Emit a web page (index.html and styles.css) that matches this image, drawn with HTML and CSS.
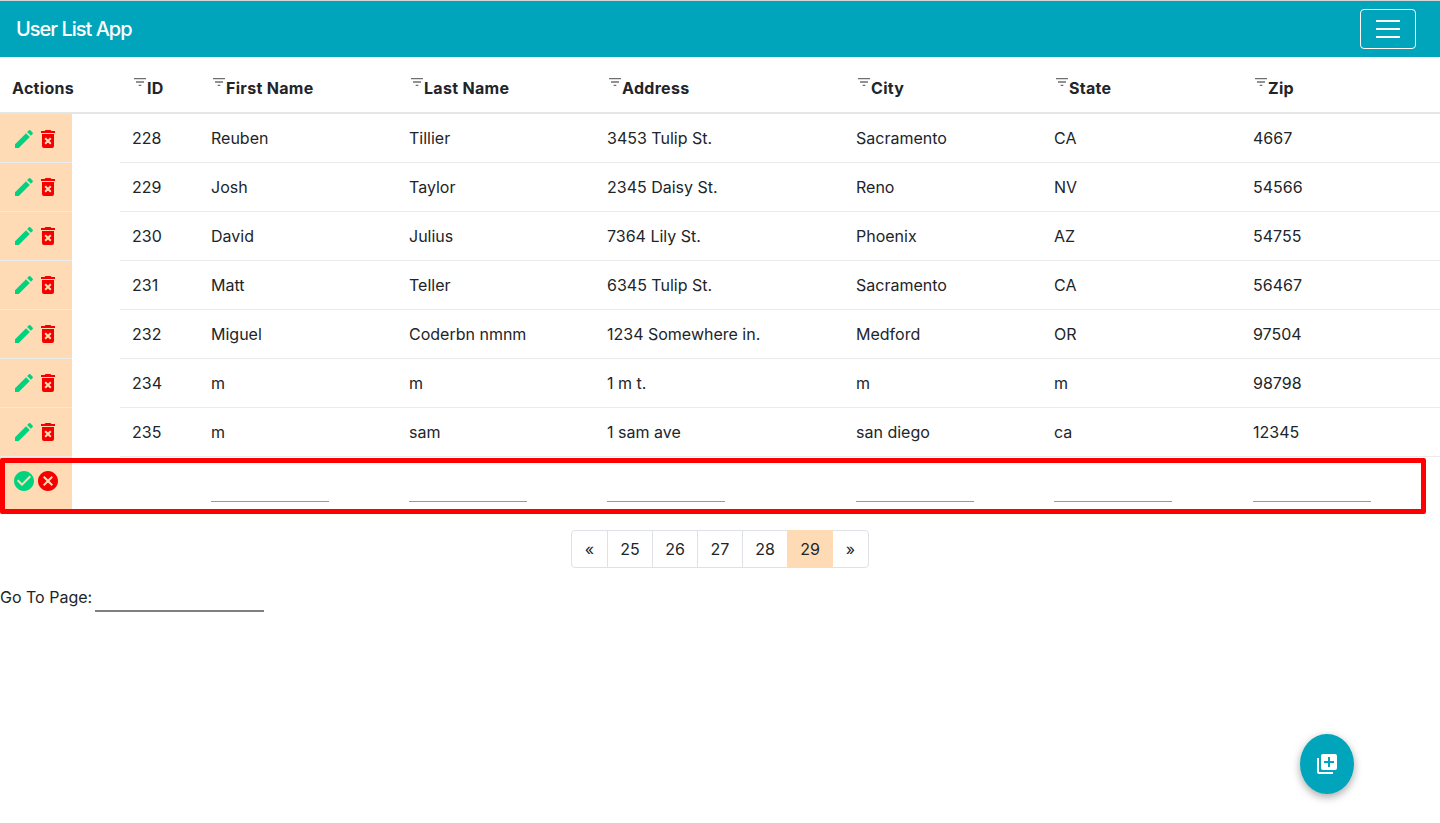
FILE: index.html
```html
<!DOCTYPE html>
<html lang="en">
<head>
<meta charset="utf-8">
<title>User List App</title>
<link rel="stylesheet" href="styles.css">
</head>
<body>
<svg class="sprites" aria-hidden="true">
  <symbol id="i-pencil" viewBox="0 0 24 24"><path d="M20.71,7.04C21.1,6.65 21.1,6 20.71,5.63L18.37,3.29C18,2.9 17.35,2.9 16.96,3.29L15.12,5.12L18.87,8.87M3,17.25V21H6.75L17.81,9.93L14.06,6.18L3,17.25Z"/></symbol>
  <symbol id="i-trash" viewBox="0 0 24 24"><path d="M6,19A2,2 0 0,0 8,21H16A2,2 0 0,0 18,19V7H6V19M8.46,11.88L9.87,10.47L12,12.59L14.12,10.47L15.53,11.88L13.41,14L15.53,16.12L14.12,17.53L12,15.41L9.87,17.53L8.46,16.12L10.59,14L8.46,11.88M15.5,4L14.5,3H9.5L8.5,4H5V6H19V4H15.5Z"/></symbol>
  <symbol id="i-filter" viewBox="0 0 24 24"><path d="M6,13H18V11H6M3,6V8H21V6M10,18H14V16H10V18Z"/></symbol>
</svg>

<nav class="navbar">
  <a class="brand">User List App</a>
  <button class="toggler" type="button" aria-label="Menu"><span></span><span></span><span></span></button>
</nav>

<div class="table-wrap">
  <table class="users">
    <colgroup>
      <col class="c-actions"><col class="c-gap"><col class="c-id"><col class="c-first"><col class="c-last"><col class="c-addr"><col class="c-city"><col class="c-state"><col class="c-zip">
    </colgroup>
    <thead>
      <tr>
        <th colspan="2">Actions</th>
        <th><span class="head"><svg class="filter"><use href="#i-filter"/></svg>ID</span></th>
        <th><span class="head"><svg class="filter"><use href="#i-filter"/></svg>First Name</span></th>
        <th><span class="head"><svg class="filter"><use href="#i-filter"/></svg>Last Name</span></th>
        <th><span class="head"><svg class="filter"><use href="#i-filter"/></svg>Address</span></th>
        <th><span class="head"><svg class="filter"><use href="#i-filter"/></svg>City</span></th>
        <th><span class="head"><svg class="filter"><use href="#i-filter"/></svg>State</span></th>
        <th><span class="head"><svg class="filter"><use href="#i-filter"/></svg>Zip</span></th>
      </tr>
    </thead>
    <tbody>
      <tr>
        <td class="act"><span class="icons"><svg class="ic green"><use href="#i-pencil"/></svg><svg class="ic red"><use href="#i-trash"/></svg></span></td><td class="gap"></td>
        <td>228</td><td>Reuben</td><td>Tillier</td><td>3453 Tulip St.</td><td>Sacramento</td><td>CA</td><td>4667</td>
      </tr>
      <tr>
        <td class="act"><span class="icons"><svg class="ic green"><use href="#i-pencil"/></svg><svg class="ic red"><use href="#i-trash"/></svg></span></td><td class="gap"></td>
        <td>229</td><td>Josh</td><td>Taylor</td><td>2345 Daisy St.</td><td>Reno</td><td>NV</td><td>54566</td>
      </tr>
      <tr>
        <td class="act"><span class="icons"><svg class="ic green"><use href="#i-pencil"/></svg><svg class="ic red"><use href="#i-trash"/></svg></span></td><td class="gap"></td>
        <td>230</td><td>David</td><td>Julius</td><td>7364 Lily St.</td><td>Phoenix</td><td>AZ</td><td>54755</td>
      </tr>
      <tr>
        <td class="act"><span class="icons"><svg class="ic green"><use href="#i-pencil"/></svg><svg class="ic red"><use href="#i-trash"/></svg></span></td><td class="gap"></td>
        <td>231</td><td>Matt</td><td>Teller</td><td>6345 Tulip St.</td><td>Sacramento</td><td>CA</td><td>56467</td>
      </tr>
      <tr>
        <td class="act"><span class="icons"><svg class="ic green"><use href="#i-pencil"/></svg><svg class="ic red"><use href="#i-trash"/></svg></span></td><td class="gap"></td>
        <td>232</td><td>Miguel</td><td>Coderbn nmnm</td><td>1234 Somewhere in.</td><td>Medford</td><td>OR</td><td>97504</td>
      </tr>
      <tr>
        <td class="act"><span class="icons"><svg class="ic green"><use href="#i-pencil"/></svg><svg class="ic red"><use href="#i-trash"/></svg></span></td><td class="gap"></td>
        <td>234</td><td>m</td><td>m</td><td>1 m t.</td><td>m</td><td>m</td><td>98798</td>
      </tr>
      <tr>
        <td class="act"><span class="icons"><svg class="ic green"><use href="#i-pencil"/></svg><svg class="ic red"><use href="#i-trash"/></svg></span></td><td class="gap"></td>
        <td>235</td><td>m</td><td>sam</td><td>1 sam ave</td><td>san diego</td><td>ca</td><td>12345</td>
      </tr>
      <tr class="edit-row">
        <td class="act">
          <span class="icons edit-icons">
            <svg class="ic green" viewBox="0 0 24 24"><path d="M12 2C6.5 2 2 6.5 2 12S6.5 22 12 22 22 17.5 22 12 17.5 2 12 2M10 17L5 12L6.41 10.59L10 14.17L17.59 6.58L19 8L10 17Z"/></svg>
            <svg class="ic red" viewBox="0 0 24 24"><path d="M12,2C17.53,2 22,6.47 22,12C22,17.53 17.53,22 12,22C6.47,22 2,17.53 2,12C2,6.47 6.47,2 12,2M15.59,7L12,10.59L8.41,7L7,8.41L10.59,12L7,15.59L8.41,17L12,13.41L15.59,17L17,15.59L13.41,12L17,8.41L15.59,7Z"/></svg>
          </span>
        </td>
        <td class="gap"></td>
        <td></td>
        <td><input class="field" type="text" aria-label="First Name"></td>
        <td><input class="field" type="text" aria-label="Last Name"></td>
        <td><input class="field" type="text" aria-label="Address"></td>
        <td><input class="field" type="text" aria-label="City"></td>
        <td><input class="field" type="text" aria-label="State"></td>
        <td><input class="field" type="text" aria-label="Zip"></td>
      </tr>
    </tbody>
  </table>
  <div class="highlight"></div>
</div>

<ul class="pagination">
  <li>«</li><li>25</li><li>26</li><li>27</li><li>28</li><li class="active">29</li><li>»</li>
</ul>

<div class="goto">
  <label for="goto-page">Go To Page:</label>
  <input id="goto-page" class="goto-field" type="text">
</div>

<button class="fab" type="button" aria-label="Add user">
  <svg class="fab-icon" viewBox="0 0 24 24"><path d="M19,11H15V15H13V11H9V9H13V5H15V9H19M20,2H8A2,2 0 0,0 6,4V16A2,2 0 0,0 8,18H20A2,2 0 0,0 22,16V4A2,2 0 0,0 20,2M4,6H2V20A2,2 0 0,0 4,22H18V20H4V6Z"/></svg>
</button>
</body>
</html>
```

FILE: styles.css
```css
* { box-sizing: border-box; }

html, body { height: 100%; }

body {
  margin: 0;
  border-top: 1px solid #d6d6d6;
  background: #fff;
  color: #212529;
  font-family: Inter, "Liberation Sans", sans-serif;
  font-size: 16px;
  line-height: 24px;
  overflow: hidden;
}

.sprites { display: none; }

.navbar {
  display: flex;
  align-items: center;
  justify-content: space-between;
  height: 56px;
  padding: 0 24px 0 16px;
  background: #00a5bb;
}

.brand {
  color: #fff;
  font-size: 20px;
  font-weight: 500;
  letter-spacing: -1px;
}

.toggler {
  display: flex;
  flex-direction: column;
  align-items: center;
  justify-content: center;
  gap: 6px;
  width: 56px;
  height: 40px;
  padding: 0;
  background: transparent;
  border: 1px solid #fff;
  border-radius: 4px;
}

.toggler span {
  display: block;
  width: 24px;
  height: 2px;
  background: #fff;
}

.table-wrap { position: relative; }

.users {
  width: 1440px;
  table-layout: fixed;
  border-collapse: separate;
  border-spacing: 0;
}

.c-actions { width: 72px; }
.c-gap { width: 48px; }
.c-id { width: 79px; }
.c-first, .c-last, .c-city { width: 198px; }
.c-addr { width: 249px; }
.c-state { width: 199px; }
.c-zip { width: 199px; }

.users th {
  padding: 19px 12px 12px;
  border-bottom: 2px solid #e4e7ea;
  font-weight: 700;
  letter-spacing: 0.3px;
  text-align: left;
  vertical-align: bottom;
}

.head {
  display: flex;
  align-items: flex-start;
}

.filter {
  flex: none;
  width: 16px;
  height: 16px;
  margin: -2px -1px 0 0;
  fill: #6f6f6f;
}

.users td {
  padding: 12px;
  border-bottom: 1px solid #e9ecef;
  vertical-align: top;
}

.users td.act {
  padding: 12px 0 12px 12px;
  background: #ffdbb5;
}

.users tbody tr:first-child td.act {
  padding: 13px 0 11px 12px;
}

.users td.gap {
  padding: 0;
  border-bottom: 0;
}

.icons {
  display: flex;
  height: 24px;
}

.ic {
  flex: none;
  width: 24px;
  height: 24px;
}

.green { fill: #00d37f; }
.red { fill: #f50000; }

.edit-row td {
  padding-top: 13px;
  border-bottom: 0;
}

.users .edit-row td.act {
  padding: 12px 0 0 12px;
  border-bottom: 0;
}

.field {
  display: block;
  width: 118px;
  height: 32px;
  padding: 0;
  border: 0;
  border-bottom: 1px solid #999;
  background: transparent;
  outline: 0;
}

.highlight {
  position: absolute;
  left: 0;
  right: 14px;
  bottom: 0;
  height: 56px;
  border: 5px solid #ff0000;
  border-radius: 2px;
  pointer-events: none;
}

.pagination {
  display: flex;
  justify-content: center;
  margin: 16px 0 16px;
  padding: 0;
  list-style: none;
}

.pagination li {
  width: 46px;
  height: 38px;
  margin-left: -1px;
  border: 1px solid #dee2e6;
  background: #fff;
  line-height: 36px;
  text-align: center;
}

.pagination li:first-child {
  width: 37px;
  margin-left: 0;
  border-radius: 4px 0 0 4px;
}

.pagination li:last-child {
  width: 37px;
  border-radius: 0 4px 4px 0;
}

.pagination li.active {
  position: relative;
  border-color: #ffdbb5;
  background: #ffdbb5;
}

.goto {
  display: flex;
  align-items: flex-start;
  gap: 3px;
  height: 28px;
  padding-top: 1px;
}

.goto label { min-width: 92px; }

.goto-field {
  width: 169px;
  height: 27px;
  padding: 0;
  border: 0;
  border-bottom: 2px solid #808080;
  background: transparent;
  outline: 0;
}

.fab {
  position: fixed;
  left: 1300px;
  top: 734px;
  display: flex;
  align-items: center;
  justify-content: center;
  width: 54px;
  height: 60px;
  padding: 0;
  border: 0;
  border-radius: 50%;
  background: #00a5bb;
  box-shadow: 0 3px 8px rgba(0, 0, 0, 0.35);
}

.fab-icon {
  width: 24px;
  height: 24px;
  fill: #fff;
}
```
